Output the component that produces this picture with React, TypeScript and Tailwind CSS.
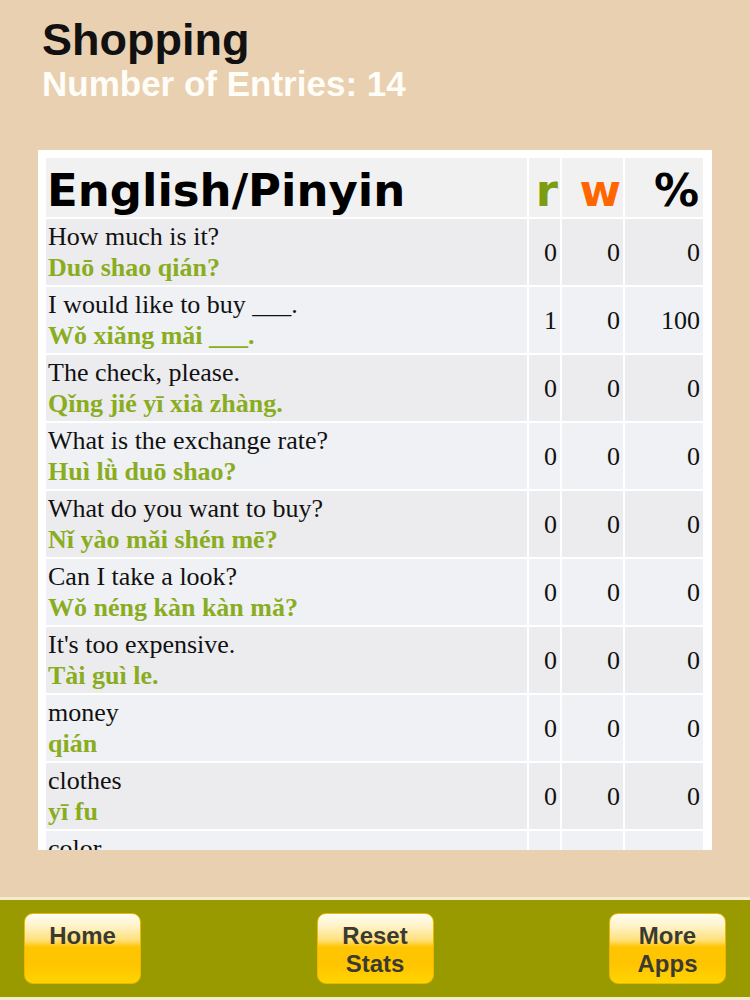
import React from "react";

interface Entry {
  english: string;
  pinyin: string;
  right: number;
  wrong: number;
  percent: number;
}

const ENTRIES: Entry[] = [
  { english: "How much is it?", pinyin: "Duō shao qián?", right: 0, wrong: 0, percent: 0 },
  { english: "I would like to buy ___.", pinyin: "Wǒ xiǎng mǎi ___.", right: 1, wrong: 0, percent: 100 },
  { english: "The check, please.", pinyin: "Qǐng jié yī xià zhàng.", right: 0, wrong: 0, percent: 0 },
  { english: "What is the exchange rate?", pinyin: "Huì lǜ duō shao?", right: 0, wrong: 0, percent: 0 },
  { english: "What do you want to buy?", pinyin: "Nǐ yào mǎi shén mē?", right: 0, wrong: 0, percent: 0 },
  { english: "Can I take a look?", pinyin: "Wǒ néng kàn kàn mă?", right: 0, wrong: 0, percent: 0 },
  { english: "It's too expensive.", pinyin: "Tài guì le.", right: 0, wrong: 0, percent: 0 },
  { english: "money", pinyin: "qián", right: 0, wrong: 0, percent: 0 },
  { english: "clothes", pinyin: "yī fu", right: 0, wrong: 0, percent: 0 },
  { english: "color", pinyin: "yán sè", right: 0, wrong: 0, percent: 0 },
  { english: "cheap", pinyin: "pián yi", right: 0, wrong: 0, percent: 0 },
  { english: "expensive", pinyin: "guì", right: 0, wrong: 0, percent: 0 },
  { english: "size", pinyin: "dà xiǎo", right: 0, wrong: 0, percent: 0 },
  { english: "store", pinyin: "shāng diàn", right: 0, wrong: 0, percent: 0 },
];

const serif = "font-['Liberation_Serif','DejaVu_Serif',serif]";

// glossy yellow iOS-style button
const FooterButton = ({ lines }: { lines: string[] }) => (
  <button className="w-[117px] h-[71px] rounded-[9px] border border-[#eab800] bg-[linear-gradient(to_bottom,#fffdf4_0%,#fff1c0_20%,#ffe07a_38%,#ffc500_48%,#ffc400_72%,#ffd400_100%)] shadow-[inset_0_1px_0_rgba(255,255,255,0.8)] pt-[8px] flex flex-col items-center font-['Liberation_Sans',Arial,sans-serif] font-bold text-[24px] leading-[28px] text-[#3a3a32]">
    {lines.map((l) => (
      <span key={l}>{l}</span>
    ))}
  </button>
);

export default function App() {
  return (
    <div className="w-[750px] h-[1000px] bg-[#e9d0b1] flex flex-col font-['Liberation_Sans',Arial,sans-serif]">
      <div className="pl-[42px] pt-[17px]">
        <h1 className="text-[45px] leading-[45px] font-bold text-[#111]">Shopping</h1>
        <p className="mt-[4px] text-[35px] leading-[35px] font-bold text-[#fffdf8]">
          Number of Entries: 14
        </p>
      </div>

      <div className="mt-[49px] ml-[38px] w-[674px] h-[700px] bg-white overflow-hidden pl-[6px] pr-[7px] pt-[6px]">
        <table className="w-full table-fixed border-separate border-spacing-[2px]">
          <colgroup>
            <col />
            <col className="w-[31px]" />
            <col className="w-[61px]" />
            <col className="w-[78px]" />
          </colgroup>
          <thead>
            <tr className="bg-[#f1f1f1] font-['DejaVu_Sans',Verdana,sans-serif] font-bold text-[45px] leading-[45px] h-[59px]">
              <th className="text-left pl-[1px] pt-[5px] text-[#000]">English/Pinyin</th>
              <th className="text-right pr-[2px] pt-[5px] text-[#7c9c12]">r</th>
              <th className="text-right pr-[2px] pt-[5px] text-[#ff6600]">w</th>
              <th className="text-right pr-[4px] pt-[5px] text-[#000]">%</th>
            </tr>
          </thead>
          <tbody className={`${serif} text-[26px] text-[#111]`}>
            {ENTRIES.map((e, i) => {
              const bg = i % 2 === 0 ? "bg-[#ececef]" : "bg-[#eff1f4]";
              return (
                <tr key={e.english} className="h-[66px]">
                  <td className={`${bg} pl-[2px] leading-[31px] align-middle`}>
                    <div className="whitespace-nowrap">{e.english}</div>
                    <div className="whitespace-nowrap font-bold text-[#8aad1f]">{e.pinyin}</div>
                  </td>
                  <td className={`${bg} text-right pr-[3px] align-middle`}>{e.right}</td>
                  <td className={`${bg} text-right pr-[3px] align-middle`}>{e.wrong}</td>
                  <td className={`${bg} text-right pr-[3px] align-middle`}>{e.percent}</td>
                </tr>
              );
            })}
          </tbody>
        </table>
      </div>

      <div className="mt-auto h-[103px] border-t-[3px] border-b-[3px] border-[#f4ebcc] bg-[#999a00] flex items-center justify-between px-[24px]">
        <FooterButton lines={["Home"]} />
        <FooterButton lines={["Reset", "Stats"]} />
        <FooterButton lines={["More", "Apps"]} />
      </div>
    </div>
  );
}
